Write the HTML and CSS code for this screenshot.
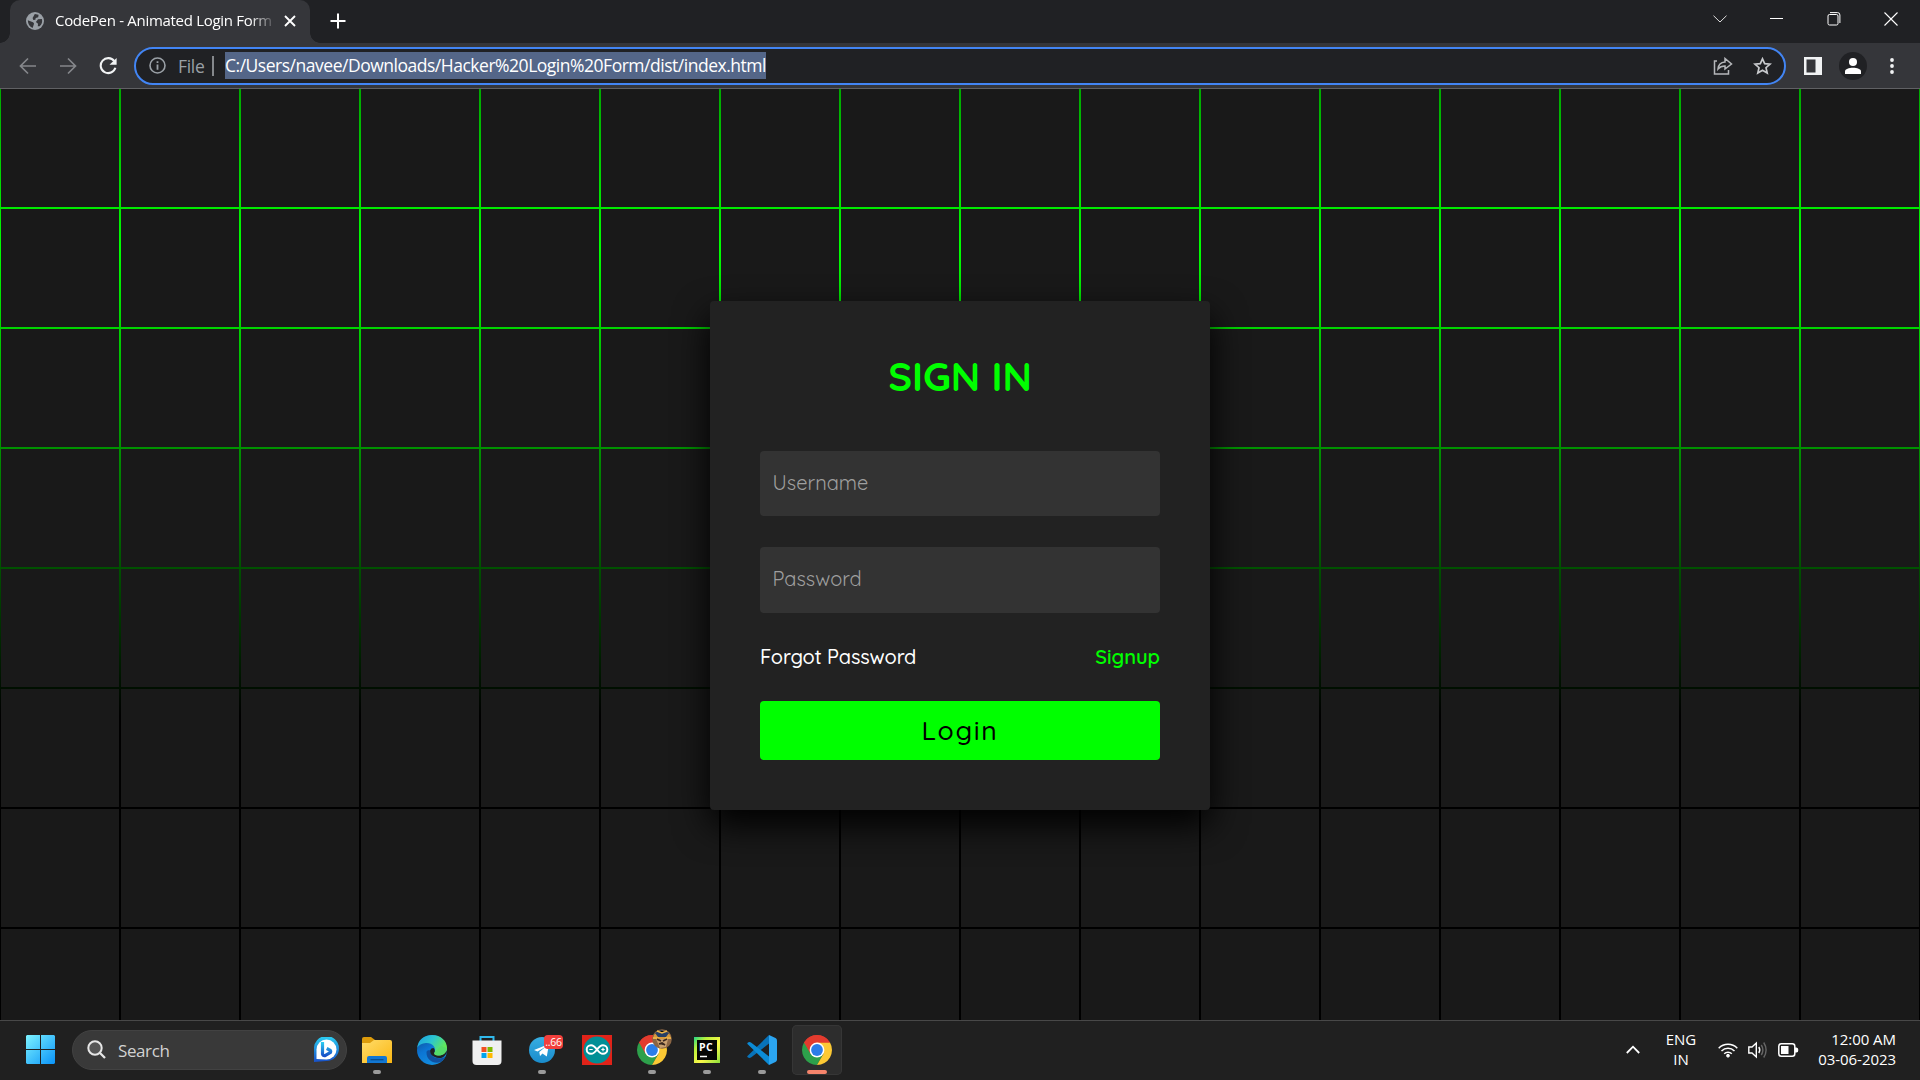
FILE: index.html
```html
<!DOCTYPE html>
<html lang="en">
<head>
<meta charset="utf-8">
<title>CodePen - Animated Login Form</title>
<link rel="stylesheet" href="styles.css">
</head>
<body>
<svg width="0" height="0" class="defs">
  <defs>
    <linearGradient id="win" x1="0" y1="0" x2="1" y2="1"><stop offset="0" stop-color="#7df3ff"/><stop offset="1" stop-color="#0a93f8"/></linearGradient>
    <linearGradient id="folder" x1="0" y1="0" x2="1" y2="1"><stop offset="0" stop-color="#ffdc6a"/><stop offset="1" stop-color="#fbb713"/></linearGradient>
    <linearGradient id="edgeTop" x1="0" y1="0" x2="1" y2=".5"><stop offset="0" stop-color="#1b9de2"/><stop offset=".5" stop-color="#2cc5cf"/><stop offset="1" stop-color="#66eb4f"/></linearGradient>
    <linearGradient id="edgeLow" x1="0" y1="0" x2=".6" y2="1"><stop offset="0" stop-color="#114a8b"/><stop offset=".5" stop-color="#0c75d4"/><stop offset="1" stop-color="#1390e0"/></linearGradient>
    <linearGradient id="bing" x1="0" y1="0" x2="0" y2="1"><stop offset="0" stop-color="#2bd1f3"/><stop offset="1" stop-color="#1850c8"/></linearGradient>
    <linearGradient id="tele" x1="0" y1="0" x2="0" y2="1"><stop offset="0" stop-color="#37aee2"/><stop offset="1" stop-color="#1a8ccc"/></linearGradient>
    <linearGradient id="pc" x1="0" y1="0" x2="1" y2="1"><stop offset="0" stop-color="#21d789"/><stop offset=".25" stop-color="#b8f03a"/><stop offset=".6" stop-color="#fcf84a"/><stop offset="1" stop-color="#8be03c"/></linearGradient>
    <symbol id="chrome" viewBox="0 0 30 30">
      <path d="M15 15 2.01 7.5A15 15 0 0 1 27.99 7.5Z" fill="#e33b2e"/>
      <path d="M15 15 2.01 7.5A15 15 0 0 0 15 30L21.5 18.7Z" fill="#2da04b"/>
      <path d="M15 7.5H27.99A15 15 0 0 1 15 30L21.5 18.75Z" fill="#fcc934"/>
      <path d="M2.01 7.5 8.5 18.75 15 15V7.5H27.99A15 15 0 0 0 2.01 7.5Z" fill="#e33b2e"/>
      <circle cx="15" cy="15" r="7.4" fill="#fff"/><circle cx="15" cy="15" r="5.9" fill="#2b7de9"/>
    </symbol>
  </defs>
</svg>

<header class="tabstrip">
  <div class="tab">
    <svg class="globe" width="18" height="18" viewBox="0 0 18 18"><circle cx="9" cy="9" r="9" fill="#9aa0a6"/><path d="M1.8 8.2 7 10.2q1.6.8.8 2.4L6.600 16Q2 14 1.800 8.200ZM8.800 1.900 12.600 2.700 12.200 5.200 9.700 6 9.400 7.700 7.300 8 6.600 5.900ZM12 7.200 15.900 6.900Q17 11 13.600 14.300L11.800 14.300 12 11.700 9.900 10Z" fill="#35363a"/></svg>
    <span class="tab-title">CodePen - Animated Login Form</span>
    <svg width="12" height="12" viewBox="0 0 12 12"><path d="M1 1 11 11M11 1 1 11" stroke="#fff" stroke-width="1.9"/></svg>
  </div>
  <svg class="new-tab" width="16" height="16" viewBox="0 0 16 16"><path d="M8 .5V15.500M.5 8H15.500" stroke="#fff" stroke-width="2"/></svg>
  <div class="window-buttons">
    <svg width="14" height="8" viewBox="0 0 14 8"><path d="M.5.700 7 7 13.500.700" fill="none" stroke="#ddd" stroke-width="1"/></svg>
    <svg width="13" height="13" viewBox="0 0 13 13"><path d="M0 6.500H13" stroke="#fff"/></svg>
    <svg width="14" height="14" viewBox="0 0 14 14" fill="none" stroke="#fff"><rect x="1" y="2.500" width="10" height="10.500" rx="1.500"/><path d="M3 .600H10.500Q12.900.600 12.900 3V11"/></svg>
    <svg width="14" height="14" viewBox="0 0 14 14"><path d="M.5.500 13.500 13.500M13.500.500.500 13.500" stroke="#fff" stroke-width="1.100"/></svg>
  </div>
</header>

<nav class="toolbar">
  <svg class="back" width="18" height="18" viewBox="0 0 18 18" fill="none" stroke="#85878b" stroke-width="1.700"><path d="M17 9H2M9 1.500 1.500 9 9 16.500"/></svg>
  <svg class="forward" width="18" height="18" viewBox="0 0 18 18" fill="none" stroke="#85878b" stroke-width="1.700"><path d="M1 9H16M9 1.500 16.500 9 9 16.500"/></svg>
  <svg class="reload" width="18" height="18" viewBox="0 0 18 18"><path d="M15.300 4.200A7.500 7.500 0 1 0 16.400 10.800" fill="none" stroke="#f1f3f4" stroke-width="2.100"/><path d="M17.600 1V7.800H10.500Z" fill="#f1f3f4"/></svg>
  <div class="address">
    <svg width="17" height="17" viewBox="0 0 17 17"><circle cx="8.500" cy="8.500" r="7.500" fill="none" stroke="#9aa0a6" stroke-width="1.600"/><path d="M8.500 4.200V6M8.500 7.500V12.700" stroke="#9aa0a6" stroke-width="1.800"/></svg>
    <span class="scheme">File</span>
    <span class="divider"></span>
    <span class="url">C:/Users/navee/Downloads/Hacker%20Login%20Form/dist/index.html</span>
    <svg class="share" width="20" height="18" viewBox="0 0 20 18" fill="none" stroke="#b5b7ba" stroke-width="1.500"><path d="M4 4H1.500V17H15.500V13"/><path d="M5 12Q5.500 5.500 12 5V1.500L18.500 7 12 12V9Q7.500 9 5 12Z"/></svg>
    <svg width="19" height="18" viewBox="0 0 19 18" fill="none" stroke="#c8cacd" stroke-width="1.700"><path d="M9.500 1.800 11.700 6.700 17 7.200 13 10.700 14.200 16 9.500 13.200 4.800 16 6 10.700 2 7.200 7.300 6.700Z"/></svg>
  </div>
  <svg class="panel" width="18" height="18" viewBox="0 0 18 18"><rect width="18" height="18" fill="#f1f3f4"/><rect x="2.500" y="2.500" width="9" height="13" fill="#35363a"/></svg>
  <svg class="profile" width="28" height="28" viewBox="0 0 28 28"><circle cx="14" cy="14" r="14" fill="#202124"/><circle cx="14" cy="10" r="4" fill="#fff"/><path d="M6 22V19.500C6 14.500 22 14.500 22 19.500V22Z" fill="#fff"/></svg>
  <svg class="menu" width="4" height="16" viewBox="0 0 4 16" fill="#f1f3f4"><circle cx="2" cy="2" r="1.900"/><circle cx="2" cy="8" r="1.900"/><circle cx="2" cy="14" r="1.900"/></svg>
</nav>

<main class="page">
  <svg class="tiles" width="1920" height="931">
    <defs><pattern id="tile" x="1" y="0" width="120" height="120" patternUnits="userSpaceOnUse"><rect width="118" height="118" fill="#191919"/></pattern></defs>
    <rect width="1920" height="931" fill="url(#tile)"/>
  </svg>
  <section class="card">
    <h1>SIGN IN</h1>
    <div class="field"><span class="user-label">Username</span></div>
    <div class="field"><span class="pass-label">Password</span></div>
    <div class="links"><a class="forgot">Forgot Password</a><a class="signup">Signup</a></div>
    <button class="login">Login</button>
  </section>
</main>

<footer class="taskbar">
  <svg class="start" width="29" height="29" viewBox="0 0 29 29" fill="url(#win)"><path d="M1 0H14V14H0V1ZM15 0H28L29 1V14H15ZM0 15H14V29H1L0 28ZM15 15H29V28L28 29H15Z"/></svg>
  <div class="search">
    <svg width="19" height="19" viewBox="0 0 19 19" fill="none" stroke="#e6e6e6" stroke-width="2"><circle cx="8" cy="8" r="6.700" fill="#555"/><path d="M13 13 18 18" stroke-width="2.300"/></svg>
    <span class="search-text">Search</span>
    <svg width="25" height="25" viewBox="0 0 25 25"><path d="M0 25V12.500A12.500 12.500 0 1 1 12.500 24Z" fill="url(#bing)"/><path d="M2.500 22V12.500A10 10 0 1 1 12.500 22.500Z" fill="#fff"/><path d="M8.500 5V17Q9 19.200 11 18.600L16.500 15.300Q17.300 13.500 15.200 12.700L12.700 11.500" fill="none" stroke="url(#bing)" stroke-width="3.200" stroke-linejoin="round"/></svg>
  </div>
  <div class="apps">
    <div class="app running"><svg width="30" height="30" viewBox="0 0 30 30"><path d="M0 4Q0 2 2 2H9L13 5V10H0Z" fill="#dc9b0b"/><path d="M0 8H8L12 5H28Q30 5 30 7V28H0Z" fill="url(#folder)"/><path d="M5 28V23Q5 21 7 21H23Q25 21 25 23V28Z" fill="#1277d3"/><path d="M8.500 24.700H21.500" stroke="#0b4d8c" stroke-width="1.300"/></svg></div>
    <div class="app"><svg width="30" height="30" viewBox="0 0 30 30"><circle cx="15" cy="15" r="15" fill="url(#edgeLow)"/><path d="M.2 13C1 5 7 0 15 0 24 0 30 6 30 13 30 18 26 20.500 21.500 20.500 18 20.500 16 19 17.500 17 20 13 15 7.500 9 8 5 8.200 1.500 10.300.200 13Z" fill="url(#edgeTop)"/><path d="M9.500 17C9 25 17 29.500 23.500 27 26 25.500 27.500 23.700 28.300 21.800 21 25.500 12.500 22 13.300 15.300 11 15 9.700 15.500 9.500 17Z" fill="#10509f"/><path d="M13.200 15.300Q12.600 19.500 17.300 21.800 21 23.800 25 22.700 27.500 21.800 28.300 20 31 17 29 15 27 20.500 21.500 20.500 16 20 17.700 16.800 18.200 14.500 16.500 13 14 13 13.200 15.300Z" fill="#202020"/><path d="M18 17C16 19 18 20.500 21.500 20.500 26 20.500 30 18 30 13L24 11Z" fill="#55dc69"/></svg></div>
    <div class="app"><svg width="30" height="30" viewBox="0 0 30 30"><path d="M8.500 7V2H21.500V7" fill="none" stroke="#30b9ec" stroke-width="2"/><path d="M.500 5.500H29.500V26Q29.500 30 25.500 30H4.500Q.500 30 .500 26Z" fill="#f0f0f0"/><path fill="#f25022" d="M9.500 12H14.500V17H9.500Z"/><path fill="#7fba00" d="M15.500 12H20.500V17H15.500Z"/><path fill="#00a4ef" d="M9.500 18H14.500V23H9.500Z"/><path fill="#ffb900" d="M15.500 18H20.500V23H15.500Z"/></svg></div>
    <div class="app running"><svg width="26" height="26" viewBox="0 0 26 26"><circle cx="13" cy="13" r="13" fill="url(#tele)"/><path d="M5 13 20 7 17.800 19.500 13.500 16.500 11 19 10.300 15 17 9.500 8.500 14.500Z" fill="#fff"/></svg><span class="count">..66</span></div>
    <div class="app"><svg width="30" height="30" viewBox="0 0 30 30"><path d="M0 0H30V30H0Z" fill="#e12319"/><circle cx="15" cy="15" r="13.500" fill="#008f96"/><path d="M15 14.500C12.500 11 11 10.200 9 10.200A4.300 4.300 0 0 0 9 18.800C11 18.800 12.500 18 15 14.500 17.500 11 19 10.200 21 10.200A4.300 4.300 0 0 1 21 18.800C19 18.800 17.500 18 15 14.500Z" fill="none" stroke="#fff" stroke-width="2"/><path d="M7.300 14.500H10.700M19.300 14.500H22.700M21 12.800V16.200" stroke="#fff" stroke-width="1.200"/></svg></div>
    <div class="app running"><svg width="30" height="30"><use href="#chrome"/></svg><svg class="avatar" width="20" height="20" viewBox="0 0 20 20"><circle cx="10" cy="10" r="9.800" fill="#8b6544"/><path d="M2 6Q10-2 18 6L19 10H1Z" fill="#d69a3c"/><path d="M3 4 9 1 17 4 14 8H6Z" fill="#263f66"/><path d="M5 2 10 4 15 2M1 9H7M13 9H19" stroke="#efb84b" stroke-width="1.500"/><path d="M4 10H16L14 18 8 19Z" fill="#caa070"/><path d="M5 10 9 12M15 10 11 12M7 15 10 14 13 16" stroke="#3b2820" stroke-width="1.800"/></svg></div>
    <div class="app running"><svg width="26" height="26" viewBox="0 0 26 26"><path d="M0 0H26V26H0Z" fill="url(#pc)"/><path d="M3 3H23V23H3Z" fill="#050505"/><path d="M6 19.500H13" stroke="#fff" stroke-width="1.500"/></svg><span class="pc-text">PC</span></div>
    <div class="app running"><svg width="30" height="30" viewBox="0 0 30 30"><path d="M1 20.500 22 0V8.500L4 22.500Q2 23.500 .700 22.200-.300 21.300 1 20.500Z" fill="#0873b9"/><path d="M1 9.500 22 30V21.500L4 7.500Q2 6.500 .700 7.800-.300 8.700 1 9.500Z" fill="#0b8bd6"/><path d="M22 0 28.500 3Q30 3.800 30 5.500V24.500Q30 26.200 28.500 27L22 30Z" fill="#2ba5f1"/></svg></div>
    <div class="app running active"><svg width="30" height="30"><use href="#chrome"/></svg></div>
  </div>
  <div class="tray">
    <svg width="14" height="9" viewBox="0 0 14 9"><path d="M.800 8 7 1.700 13.200 8" fill="none" stroke="#fff" stroke-width="1.800"/></svg>
    <div class="lang"><span>ENG</span><span>IN</span></div>
    <svg class="wifi" width="20" height="16" viewBox="0 0 20 16" fill="none" stroke="#fff" stroke-width="1.500"><path d="M.700 6.200A13 13 0 0 1 19.300 6.200M3.500 9A9.200 9.200 0 0 1 16.500 9M6.200 11.700A5.400 5.400 0 0 1 13.800 11.700"/><circle cx="10" cy="13.700" r="1.400" fill="#fff" stroke-width="1"/></svg>
    <svg class="sound" width="20" height="18" viewBox="0 0 20 18" fill="none" stroke="#fff" stroke-width="1.400"><path d="M.800 6H4L8.300 2V16L4 12H.800Z"/><path d="M10.800 6Q12.800 9 10.800 12"/><path d="M13.300 4Q16.500 9 13.300 14M15.700 1.500Q20.500 9 15.700 16.500" stroke="#666"/></svg>
    <svg class="battery" width="21" height="14" viewBox="0 0 21 14"><rect x=".800" y=".800" width="16" height="12.400" rx="2.500" fill="none" stroke="#fff" stroke-width="1.500"/><rect x="3" y="3" width="7.500" height="8" fill="#fff"/><path d="M17 4.500H18.500Q20.300 4.500 20.300 7 20.300 9.500 18.500 9.500H17Z" fill="#fff"/></svg>
    <div class="clock"><span class="time">12:00 AM</span><span class="date">03-06-2023</span></div>
  </div>
</footer>
</body>
</html>
```
FILE: styles.css
```css
* { box-sizing: border-box; }
body {
  margin: 0; width: 1920px; height: 1080px; overflow: hidden;
  display: flex; flex-direction: column; background: #191919;
  font-family: "Segoe UI", "Open Sans", sans-serif; color: #fff;
}
svg { display: block; flex: none; }
span, a { white-space: nowrap; }
.defs { position: absolute; }

.tabstrip { height: 43px; background: #202124; display: flex; align-items: flex-start; padding-left: 10px; flex: none; }
.tab {
  position: relative; width: 300px; height: 43px; padding: 0 14px 1px 16px;
  background: #35363a; border-radius: 10px 10px 0 0; display: flex; align-items: center;
}
.tab::before, .tab::after { content: ""; position: absolute; bottom: 0; width: 10px; height: 10px; }
.tab::before { left: -10px; background: radial-gradient(circle at 0 0, transparent 9.5px, #35363a 10px); }
.tab::after { right: -10px; background: radial-gradient(circle at 100% 0, transparent 9.5px, #35363a 10px); }
.tab-title {
  margin-left: 11px; width: 217px; margin-right: 12px; padding-bottom: 2px; overflow: hidden; font-size: 15px; letter-spacing: -0.3px;
  -webkit-mask-image: linear-gradient(90deg, #000 195px, transparent 222px);
}
.new-tab { margin: 13px 0 0 19.5px; }
.window-buttons { margin-left: auto; height: 37px; padding-right: 22px; display: flex; align-items: center; gap: 43.5px; }

.toolbar { height: 46px; background: #35363a; border-bottom: 1px solid #606164; display: flex; align-items: center; padding: 0 26px 0 19px; flex: none; }
.forward { margin-left: 22px; }
.reload { margin-left: 22px; }
.address {
  margin: 0 17px 0 17px; width: 1652px; height: 38px; border: 2px solid #4285f4; border-radius: 19px;
  background: #202124; display: flex; align-items: center; padding: 0 12px 0 13px; font-size: 17.500px;
}
.scheme { margin-left: 12px; width: 26px; color: #9aa0a6; letter-spacing: -0.3px; }
.divider { width: 2px; height: 20px; margin: 0 11px 0 8px; background: #85888c; }
.url { width: 541px; height: 27px; line-height: 26px; background: #546688; letter-spacing: -0.480px; }
.share { margin-left: auto; margin-right: 20px; }
.panel { margin-left: 1px; }
.profile { margin-left: 17px; }
.menu { margin-left: auto; }

.page {
  position: relative; height: 931px; flex: none; overflow: hidden;
  display: flex; justify-content: center; padding-top: 212px;
  background: linear-gradient(#000 -307px, #0f0 159px, #000 626px);
}
.tiles { position: absolute; inset: 0; }
.card {
  position: relative; width: 500px; height: 509px; padding: 50px; border-radius: 4px;
  background: #222; box-shadow: 0 15px 35px #000; font-family: Quicksand, Lato, sans-serif;
}
h1 { margin: 0 0 50px; height: 50px; line-height: 50px; text-align: center; color: #0f0; font-size: 40px; font-weight: 700; }
.field {
  height: 65px; margin-bottom: 31px; padding: 0 0 3px 12.5px; border-radius: 4px;
  background: #333; color: #9f9f9f; font-size: 20px; display: flex; align-items: center;
}
.field + .field { height: 66px; margin-bottom: 0; padding-bottom: 3px; }
.links { height: 88px; padding-bottom: 2px; display: flex; justify-content: space-between; align-items: center; font-size: 20px; }
.forgot { font-weight: 500; letter-spacing: -0.15px; }
.signup { color: #0f0; font-weight: 600; }
.login {
  display: block; width: 400px; height: 59px; padding: 0 0 2px; border: 0; border-radius: 4px; background: #0f0;
  color: #000; font: 500 26.500px Quicksand, Lato, sans-serif; letter-spacing: 1.700px;
}

.taskbar { height: 60px; background: #202020; border-top: 1px solid #484848; display: flex; align-items: center; padding: 0 24px 2px 26px; flex: none; }
.search {
  margin-left: 17px; width: 275px; height: 40px; border-radius: 20px; background: #393939; border: 1px solid #424242;
  display: flex; align-items: center; padding: 0 7px 0 14px;
}
.search-text { margin: 0 auto 0 12px; padding-top: 1px; font-size: 17px; letter-spacing: -0.4px; color: #d2d2d2; }
.apps { margin-left: 5px; display: flex; gap: 5px; }
.app { position: relative; width: 50px; height: 50px; border-radius: 5px; display: flex; align-items: center; justify-content: center; }
.active { background: #2d2d2d; box-shadow: inset 0 0 0 1px #363636; }
.running::after { content: ""; position: absolute; left: 21px; bottom: 1px; width: 8px; height: 4px; border-radius: 2px; background: #9a9a9a; }
.active::after { left: 15px; width: 20px; background: #f5846b; }
.count {
  position: absolute; left: 27px; top: 10px; width: 19px; height: 14px; border-radius: 4px; background: #f23f3c;
  font-size: 10.500px; line-height: 14px; text-align: center; letter-spacing: -0.3px;
}
.avatar { position: absolute; left: 25px; top: 4px; }
.pc-text { position: absolute; left: 17px; top: 16px; font: 700 10.500px/12px "Open Sans", sans-serif; letter-spacing: .3px; }
.tray { margin-left: auto; display: flex; align-items: center; font-size: 15px; line-height: 20px; }
.lang { margin-left: 26px; width: 30px; padding-bottom: 1px; display: flex; flex-direction: column; align-items: center; }
.wifi { margin-left: 22px; }
.sound { margin-left: 10px; }
.battery { margin-left: 10px; }
.clock { width: 97px; padding-bottom: 2px; display: flex; flex-direction: column; align-items: flex-end; letter-spacing: -0.05px; }
```
